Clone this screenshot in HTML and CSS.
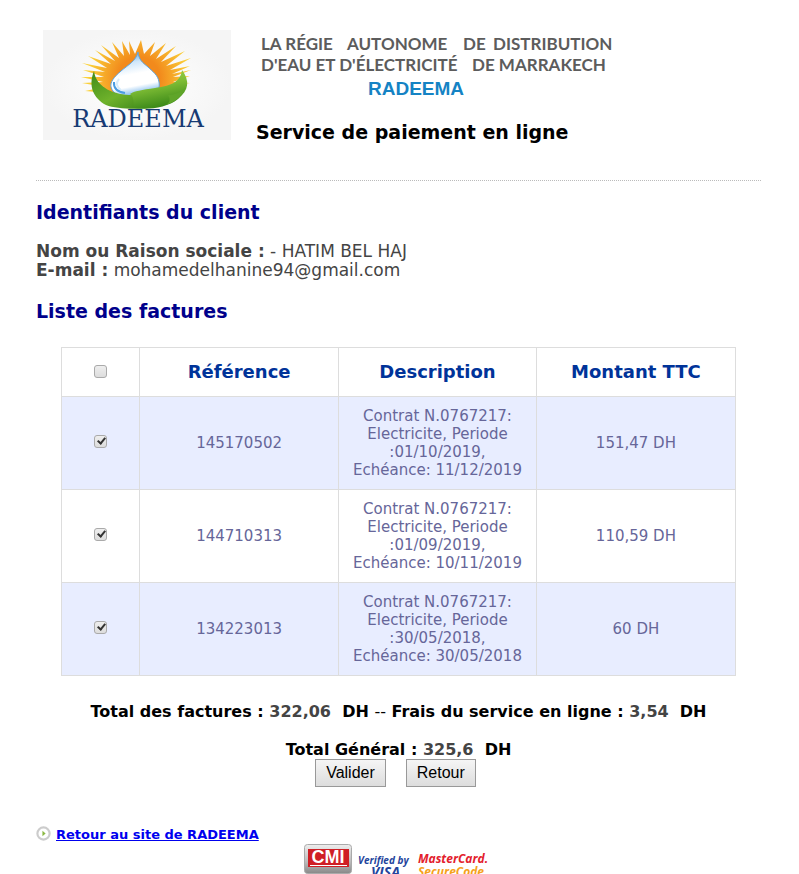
FILE: index.html
```html
<!DOCTYPE html>
<html lang="fr">
<head>
<meta charset="utf-8">
<title>RADEEMA - Service de paiement en ligne</title>
<link rel="stylesheet" href="styles.css">
</head>
<body>
<div class="page">
  <header class="header">
    <svg class="logo" viewBox="0 0 188 110" role="img" aria-label="RADEEMA">
      <defs>
        <radialGradient id="bg"><stop offset="0" stop-color="#fff"/><stop offset="1" stop-color="#f5f5f5"/></radialGradient>
        <radialGradient id="sun" gradientUnits="userSpaceOnUse" cx="96" cy="48" r="52"><stop offset="0.4" stop-color="#f28a1c"/><stop offset="1" stop-color="#fbd23a"/></radialGradient>
        <linearGradient id="drop" x1="0" y1="0" x2="0.2" y2="1"><stop offset="0" stop-color="#3b8dd8"/><stop offset="0.3" stop-color="#cfe7fa"/><stop offset="0.55" stop-color="#fff"/><stop offset="0.8" stop-color="#fff"/><stop offset="1" stop-color="#75b5ec"/></linearGradient>
        <linearGradient id="leafa" x1="0" y1="0" x2="1" y2="1"><stop offset="0" stop-color="#3f8a19"/><stop offset="0.5" stop-color="#6fb22b"/><stop offset="1" stop-color="#2f7a14"/></linearGradient>
        <linearGradient id="leafb" x1="0" y1="0" x2="0.3" y2="1"><stop offset="0" stop-color="#a5d64a"/><stop offset="0.5" stop-color="#7fbd35"/><stop offset="1" stop-color="#3d8b19"/></linearGradient>
      </defs>
      <rect width="188" height="110" fill="url(#bg)"/>
      <path fill="url(#sun)" d="M65 63L42 61 61 57 39 53 60 52 38 47 61 47 40 40 62 42 39 33 64 38 45 26 68 34 52 20 72 31 58 15 76 28 69 12 81 26 79 11 87 25 86 11 92 24 98 10 101 24 112 12 107 26 123 13 113 29 133 16 118 32 142 21 123 36 148 28 127 40 147 36 129 44 148 40 130 47 147 46 130 52 147 53 128 56 140 61 122 62Z"/>
      <path fill="url(#drop)" stroke="#5ea6e0" stroke-width="1" d="M95 22C93 31 85 35 78 41C71 47 67 52 68 57C70 65 80 69 94 68C109 67 118 63 116 52C115 45 110 42 105 37C99 32 96 30 95 22Z"/>
      <path fill="none" stroke="#4b9ce2" stroke-width="2" d="M71 52Q70 61 82 63"/>
      <path fill="none" stroke="#d8ecfb" stroke-width="2" d="M76 49Q71 55 78 60"/>
      <path fill="url(#leafa)" d="M51 41C45 56 50 68 63 75C76 80 105 80 121 75C112 66 103 66 89 65C72 65 53 58 51 41Z"/>
      <path fill="url(#leafb)" d="M139 40C137 54 125 56 112 58C99 60 91 61 87 64C92 68 90 74 91 78C105 80 124 78 135 69C146 60 147 51 139 40Z"/>
      <path fill="#5fa529" d="M125 65Q129 71 123 75Q138 70 143 57Q135 65 125 65Z"/>
      <text class="logo-name" x="95" y="97" text-anchor="middle">RADEEMA</text>
    </svg>
    <div class="heading">
      <svg class="company" viewBox="0 0 360 74" role="img" aria-label="La Régie Autonome de Distribution d'Eau et d'Électricité de Marrakech">
        <g class="company-full">
          <text x="5" y="20">LA RÉGIE</text><text x="91" y="20">AUTONOME</text><text x="207" y="20">DE</text><text x="237" y="20">DISTRIBUTION</text>
          <text x="5" y="41">D'EAU ET D'ÉLECTRICITÉ</text><text x="216" y="41">DE MARRAKECH</text>
        </g>
        <text class="company-short" x="112" y="65">RADEEMA</text>
      </svg>
      <h1 class="title">Service de paiement en ligne</h1>
    </div>
  </header>
  <main>
    <h2 class="subtitle">Identifiants du client</h2>
    <p class="client"><b>Nom ou Raison sociale :</b> - HATIM BEL HAJ<br><b>E-mail :</b> mohamedelhanine94@gmail.com</p>
    <h2 class="subtitle">Liste des factures</h2>
    <form class="form">
      <table class="bills">
        <thead>
          <tr><th class="pick"><input class="check" type="checkbox" aria-label="Toutes les factures"></th><th>Référence</th><th>Description</th><th>Montant TTC</th></tr>
        </thead>
        <tbody>
          <tr class="odd"><td><input class="check" type="checkbox" checked aria-label="Facture 145170502"></td><td>145170502</td><td>Contrat N.0767217:<br>Electricite, Periode<br>:01/10/2019,<br>Echéance: 11/12/2019</td><td>151,47 DH</td></tr>
          <tr><td><input class="check" type="checkbox" checked aria-label="Facture 144710313"></td><td>144710313</td><td>Contrat N.0767217:<br>Electricite, Periode<br>:01/09/2019,<br>Echéance: 10/11/2019</td><td>110,59 DH</td></tr>
          <tr class="odd"><td><input class="check" type="checkbox" checked aria-label="Facture 134223013"></td><td>134223013</td><td>Contrat N.0767217:<br>Electricite, Periode<br>:30/05/2018,<br>Echéance: 30/05/2018</td><td>60 DH</td></tr>
        </tbody>
      </table>
      <p class="totals">Total des factures : <span class="amount">322,06</span>&nbsp; DH <span class="dash">--</span> Frais du service en ligne : <span class="amount">3,54</span>&nbsp; DH</p>
      <p class="totals grand">Total Général : <span class="amount">325,6</span>&nbsp; DH</p>
      <div class="actions"><button class="button" type="button">Valider</button><button class="button" type="button">Retour</button></div>
    </form>
  </main>
  <footer>
    <a class="back" href="#"><svg class="arrow" viewBox="0 0 14 14" aria-hidden="true"><circle cx="7" cy="7" r="5.7" fill="#fff" stroke="#ccc" stroke-width="2"/><path d="M6 4.5L9 7 6 9.5Z" fill="#8ab843"/></svg><span class="back-text">Retour au site de RADEEMA</span></a>
    <svg class="cards" viewBox="0 0 190 36" role="img" aria-label="CMI, Verified by Visa, MasterCard SecureCode">
      <defs><linearGradient id="metal" x1="0" y1="0" x2="0" y2="1"><stop offset="0" stop-color="#eee"/><stop offset="0.6" stop-color="#bbb"/><stop offset="1" stop-color="#888"/></linearGradient></defs>
      <rect x="0.5" y="0.5" width="47" height="29" rx="3" fill="url(#metal)" stroke="#aaa"/>
      <path fill="#cf1f25" d="M4 5H45V23H4Z"/>
      <path stroke="#fff" stroke-width="1" d="M6 21.5H43"/>
      <text class="cmi" x="24" y="19" text-anchor="middle">CMI</text>
      <text class="verified" x="54" y="20">Verified by</text>
      <text class="visa" x="67" y="33">VISA</text>
      <text class="mastercard" x="114" y="19">MasterCard.</text>
      <text class="secure" x="114" y="32">SecureCode</text>
    </svg>
  </footer>
</div>
</body>
</html>
```
FILE: styles.css
```css
body {
  margin: 0;
  background: #fff;
  color: #444;
  font: 17px/19px Verdana, "DejaVu Sans", sans-serif;
}
.page { padding: 30px 38px 0 36px; }
.header {
  display: flex;
  align-items: flex-start;
  gap: 25px;
  padding: 0 7px 36px;
  border-bottom: 1px dotted #bbb;
}
.logo { width: 188px; height: 110px; }
.logo-name { font: 24px "DejaVu Serif", serif; fill: #173a73; }
.company { display: block; width: 360px; height: 74px; }
.company-full { font: bold 17px Lato, sans-serif; fill: #5c5c5c; }
.company-short { font: bold 19px "Liberation Sans", sans-serif; fill: #1583c4; }
.title, .subtitle { margin: 0; font-size: 19px; line-height: 24px; }
.title { margin-top: 16px; color: #000; }
.subtitle { margin: 19px 0 18px; color: #00008b; }
.client { margin: 0; }
.form { text-align: center; }
.bills {
  width: 93%;
  margin: 24px auto 26px;
  border-collapse: collapse;
  table-layout: fixed;
  color: #669;
  font-size: 15px;
  line-height: 18px;
}
.bills th, .bills td { padding: 10px 4px; border: 1px solid #ddd; }
.bills th { height: 28px; color: #039; font-size: 18px; }
.bills .pick { width: 69px; }
.odd { background: #e8edff; }
.check {
  appearance: none;
  width: 13px;
  height: 13px;
  margin: 0;
  border: 1px solid #aaa;
  border-radius: 3px;
  background: linear-gradient(#eee, #ddd);
}
.check:checked::after {
  content: "";
  display: block;
  width: 3px;
  height: 6px;
  margin: 0 0 0 4px;
  border: solid #333;
  border-width: 0 2px 2px 0;
  transform: rotate(40deg);
}
.totals { margin: 0 0 19px; color: #000; font-size: 16px; font-weight: bold; }
.grand { margin: 0; }
.amount { color: #444; }
.dash { font-weight: normal; }
.actions { display: flex; justify-content: center; gap: 20px; margin-right: 6px; }
.button {
  height: 28px;
  padding: 0 10px;
  border: 1px solid #999;
  border-radius: 0;
  background: linear-gradient(#f5f5f5, #ddd);
  color: #000;
  font: 16px "Liberation Sans", sans-serif;
}
.back {
  display: flex;
  gap: 5px;
  width: max-content;
  margin-top: 39px;
  color: #00e;
  font-size: 13px;
  font-weight: bold;
  line-height: 18px;
  text-decoration: none;
}
.back-text { text-decoration: underline; }
.arrow { width: 15px; height: 15px; }
.cards { display: block; width: 190px; height: 36px; margin: 0 auto; }
.cmi { font: bold 18px "Liberation Sans", sans-serif; fill: #fff; }
.verified { font: italic bold 10px "Open Sans", sans-serif; fill: #24449c; }
.visa { font: italic bold 14px "Open Sans", sans-serif; fill: #24449c; }
.mastercard { font: italic bold 12px "Open Sans", sans-serif; fill: #e3202c; }
.secure { font: italic bold 12px "Open Sans", sans-serif; fill: #f6a21c; }
```
